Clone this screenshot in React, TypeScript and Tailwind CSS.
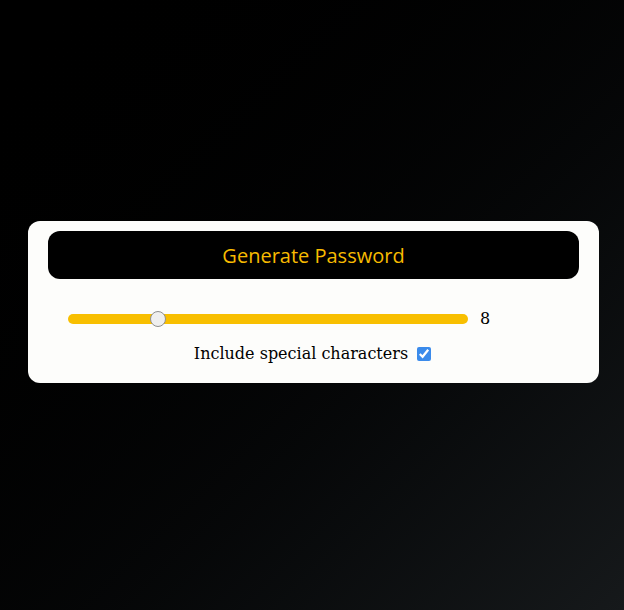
import { useState } from 'react';

export default function App() {
  const [length, setLength] = useState(8);
  const [special, setSpecial] = useState(true);

  return (
    <div className="min-h-screen bg-linear-to-br from-black to-[#16191b] pt-[221px] pl-[28px]">
      <div className="w-[571px] rounded-xl bg-[#fdfdfb] px-5 pt-[10px] pb-[17px]">
        <button className="h-12 w-full rounded-xl bg-black pt-px text-[20px] text-[#f7bb00] [font-family:'Open_Sans',sans-serif]">
          Generate Password
        </button>

        <div className="mt-7 flex h-6 items-center pl-5 [font-family:'DejaVu_Serif',serif]">
          <input
            type="range"
            min={2}
            max={30}
            value={length}
            onChange={(e) => setLength(Number(e.target.value))}
            className="h-[10px] w-[400px] cursor-pointer appearance-none rounded-full bg-[#f8bf00] outline-none [&::-webkit-slider-thumb]:h-4 [&::-webkit-slider-thumb]:w-4 [&::-webkit-slider-thumb]:appearance-none [&::-webkit-slider-thumb]:rounded-full [&::-webkit-slider-thumb]:border [&::-webkit-slider-thumb]:border-[#8f8f8f] [&::-webkit-slider-thumb]:bg-[#efefef]"
          />
          <span className="ml-3 text-base text-black">{length}</span>
        </div>

        <label className="mt-[11px] flex h-6 items-center justify-center gap-[9px] pr-[2px] text-base text-black [font-family:'DejaVu_Serif',serif]">
          Include special characters
          <input
            type="checkbox"
            checked={special}
            onChange={(e) => setSpecial(e.target.checked)}
            className="h-[14px] w-[14px] accent-[#3b8beb]"
          />
        </label>
      </div>
    </div>
  );
}
